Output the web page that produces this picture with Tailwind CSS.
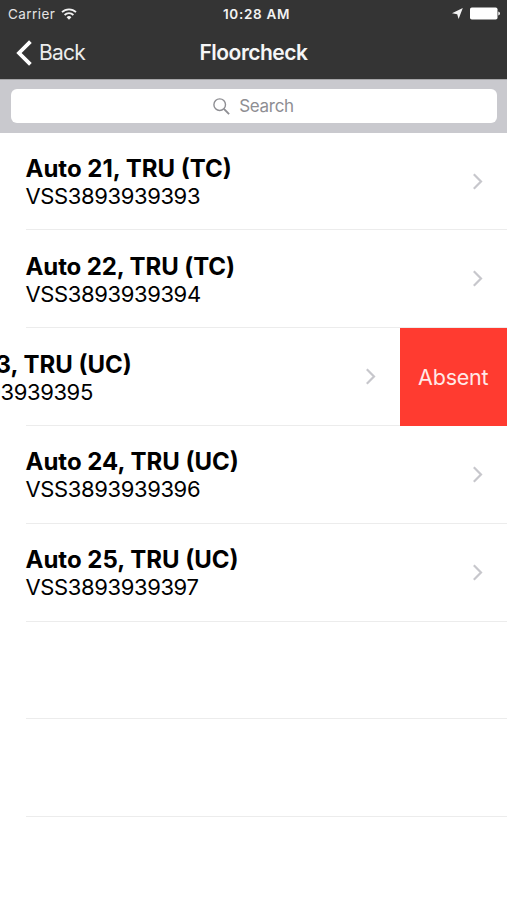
<!DOCTYPE html>
<html lang="en">
<head>
  <meta charset="UTF-8">
  <title>Floorcheck</title>
  <script src="https://cdn.jsdelivr.net/npm/@tailwindcss/browser@4"></script>
</head>
<body class="bg-white text-black font-['Inter','Liberation_Sans',sans-serif] overflow-hidden">
  <div class="w-[507px] h-[900px] overflow-hidden flex flex-col">
    <header class="h-[79px] shrink-0 bg-[#343434] text-white">
      <!-- Status bar -->
      <div class="h-[27px] grid grid-cols-3 items-center pl-[8px] pr-[7px] text-[13.5px] leading-none">
        <div class="flex items-center gap-[6px] text-[#e4e4e4]">
          <span class="tracking-[0.45px] pt-[2px]">Carrier</span>
          <svg class="w-4 h-3" viewBox="0 0 16 12" fill="none" stroke="#f2f2f2" stroke-width="1.8">
            <path d="M1 4.2a10 10 0 0 1 14 0M3.6 7a6.3 6.3 0 0 1 8.8 0"/>
            <path d="M8 11.8 5.6 9.2a3.4 3.4 0 0 1 4.8 0z" fill="#f2f2f2" stroke="none"/>
          </svg>
        </div>
        <span class="text-center font-semibold tracking-[0.7px] text-[#f2f2f2] whitespace-nowrap pl-[5px] pt-[2px]">10:28 AM</span>
        <div class="flex items-center justify-end gap-[7px]">
          <svg class="w-[11px] h-[11px]" viewBox="0 0 11 11" fill="#f2f2f2"><path d="M10.8 0 6.6 11 5.2 6.2 0 5.2z"/></svg>
          <svg class="w-[30px] h-[13px]" viewBox="0 0 30 13" fill="#fff"><rect x="0" y="0.5" width="27.5" height="12" rx="1.8"/><path d="M28.3 4.5q1.7.6 1.7 2t-1.7 2z"/></svg>
        </div>
      </div>
      <!-- Navigation bar -->
      <div class="h-[52px] grid grid-cols-3 items-center pl-[16px] pr-[16px]">
        <div class="flex items-center gap-[7px]">
          <svg class="w-[16px] h-[26px] -mt-px" viewBox="0 0 16 26" fill="none" stroke="#fff" stroke-width="3.8"><path d="M14.4 1.6 3 13l11.4 11.4"/></svg>
          <span class="text-[21px] tracking-[-0.8px] text-[#ececec]">Back</span>
        </div>
        <h1 class="text-center text-[21px] tracking-[-0.5px] font-semibold text-[#f6f6f6]">Floorcheck</h1>
      </div>
    </header>

    <div class="h-[53.7px] shrink-0 bg-[#c9c9ce] border-t border-[#a5a5a7] px-[10.5px] pt-[9px]">
      <div class="h-[34px] bg-white rounded-[6px] flex items-center justify-center gap-[9px] text-[#8e8e93] text-[17px]">
        <svg class="w-[17px] h-[17px]" viewBox="0 0 17 17" fill="none" stroke="#8e8e93" stroke-width="1.4"><circle cx="6.7" cy="6.7" r="5.8"/><path d="m10.9 10.9 5.2 5.2" stroke-width="1.9"/></svg>
        <span class="tracking-[-0.3px] pt-[2px]">Search</span>
      </div>
    </div>

    <ul class="flex flex-col">
      <li class="h-[97.8px] shrink-0 ml-[25.5px] pr-[24px] border-b-[1.5px] border-[#ececec] flex items-center justify-between">
        <div class="pt-[1.5px]">
          <p class="text-[24px] leading-[29px] font-bold">Auto 21, TRU (TC)</p>
          <p class="text-[22px] leading-[27px] tracking-[-0.38px]">VSS3893939393</p>
        </div>
        <svg class="w-[11px] h-[17px]" viewBox="0 0 11 17" fill="none" stroke="#c7c7cc" stroke-width="2.2"><path d="m1.8 1.3 7.2 7.2-7.2 7.2"/></svg>
      </li>
      <li class="h-[97.8px] shrink-0 ml-[25.5px] pr-[24px] border-b-[1.5px] border-[#ececec] flex items-center justify-between">
        <div class="pt-[1.5px]">
          <p class="text-[24px] leading-[29px] font-bold tracking-[-0.1px]">Auto 22, TRU (TC)</p>
          <p class="text-[22px] leading-[27px] tracking-[-0.38px]">VSS3893939394</p>
        </div>
        <svg class="w-[11px] h-[17px]" viewBox="0 0 11 17" fill="none" stroke="#c7c7cc" stroke-width="2.2"><path d="m1.8 1.3 7.2 7.2-7.2 7.2"/></svg>
      </li>
      <!-- Row swiped left, action button showing -->
      <li class="h-[97.8px] shrink-0 flex justify-end">
        <div class="w-[374px] ml-[25.5px] shrink-0 border-b-[1.5px] border-[#ececec] pr-[24px] flex items-center justify-between">
          <div class="-ml-[107px] whitespace-nowrap pt-[2.5px]">
            <p class="text-[24px] leading-[29px] font-bold">Auto 23, TRU (UC)</p>
            <p class="text-[22px] leading-[27px] tracking-[-0.38px]">VSS3893939395</p>
          </div>
          <svg class="w-[11px] h-[17px]" viewBox="0 0 11 17" fill="none" stroke="#c7c7cc" stroke-width="2.2"><path d="m1.8 1.3 7.2 7.2-7.2 7.2"/></svg>
        </div>
        <button class="w-[107.5px] shrink-0 bg-[#ff3b30] text-[#ffe9e7] text-[21.5px] tracking-[-0.2px]">Absent</button>
      </li>
      <li class="h-[97.8px] shrink-0 ml-[25.5px] pr-[24px] border-b-[1.5px] border-[#ececec] flex items-center justify-between">
        <div class="pt-[1.5px]">
          <p class="text-[24px] leading-[29px] font-bold">Auto 24, TRU (UC)</p>
          <p class="text-[22px] leading-[27px] tracking-[-0.38px]">VSS3893939396</p>
        </div>
        <svg class="w-[11px] h-[17px]" viewBox="0 0 11 17" fill="none" stroke="#c7c7cc" stroke-width="2.2"><path d="m1.8 1.3 7.2 7.2-7.2 7.2"/></svg>
      </li>
      <li class="h-[97.8px] shrink-0 ml-[25.5px] pr-[24px] border-b-[1.5px] border-[#ececec] flex items-center justify-between">
        <div class="pt-[1.5px]">
          <p class="text-[24px] leading-[29px] font-bold">Auto 25, TRU (UC)</p>
          <p class="text-[22px] leading-[27px] tracking-[-0.38px]">VSS3893939397</p>
        </div>
        <svg class="w-[11px] h-[17px]" viewBox="0 0 11 17" fill="none" stroke="#c7c7cc" stroke-width="2.2"><path d="m1.8 1.3 7.2 7.2-7.2 7.2"/></svg>
      </li>
      <li class="h-[97.8px] shrink-0 ml-[25.5px] border-b-[1.5px] border-[#ececec]"></li>
      <li class="h-[97.8px] shrink-0 ml-[25.5px] border-b-[1.5px] border-[#ececec]"></li>
    </ul>
  </div>
</body>
</html>
